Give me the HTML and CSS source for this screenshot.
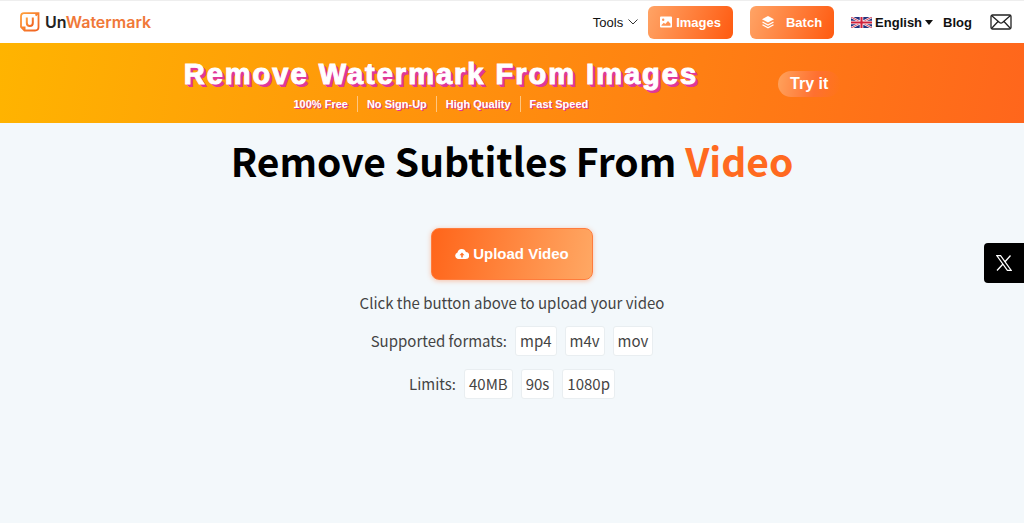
FILE: index.html
```html
<!DOCTYPE html>
<html lang="en">
<head>
    <meta charset="UTF-8">
    <meta name="viewport" content="width=device-width, initial-scale=1.0">
    <title>Remove Subtitles From Video - UnWatermark</title>
    <link rel="stylesheet" href="styles.css">
</head>
<body>
    <header class="header">
        <a class="logo" href="#">
            <svg width="20" height="20" viewBox="0 0 20 20" fill="none" aria-hidden="true">
                <defs>
                    <linearGradient id="logoFill" x1="0" y1="0" x2="1" y2="1">
                        <stop offset="0" stop-color="#ffa03c"/>
                        <stop offset="1" stop-color="#f06020"/>
                    </linearGradient>
                </defs>
                <path d="M4 1.200H18.500V15Q18.500 18.500 15 18.500H4.500L1 15V4.500Q1 1.200 4 1.200Z" stroke="url(#logoFill)" stroke-width="1.800"/>
                <path d="M15.500 3.500L18 1.500M1.500 15.500H4.500V18" stroke="url(#logoFill)" stroke-width="2"/>
                <path d="M6.800 5.500V11Q6.800 14 9.800 14T12.800 11V5.500" stroke="url(#logoFill)" stroke-width="2"/>
            </svg>
            <span>Un<span class="logo-accent">Watermark</span></span>
        </a>
        <nav class="nav">
            <button class="tools" type="button">Tools
                <svg width="10" height="6" viewBox="0 0 10 6" fill="none" stroke="#333" aria-hidden="true"><path d="M.5 .5L5 5L9.500 .5"/></svg>
            </button>
            <a class="nav-btn" href="#">
                <svg width="12" height="12" viewBox="0 0 12 12" aria-hidden="true">
                    <path fill="#fff" fill-rule="evenodd" d="M1 .5H11Q12 .5 12 1.500V10.500Q12 11.500 11 11.500H1Q0 11.500 0 10.500V1.500Q0 .5 1 .5ZM3.200 2.500A1.200 1.200 0 1 0 3.200 4.900A1.200 1.200 0 1 0 3.200 2.500ZM1.500 9.800H10.500V7.800L8 5L5.300 8L3.800 6.800L1.500 9Z"/>
                </svg>
                Images
            </a>
            <a class="nav-btn nav-btn-batch" href="#">
                <svg width="12" height="13" viewBox="0 0 12 13" aria-hidden="true">
                    <path fill="#fff" d="M6 0L12 3.300L6 6.600L0 3.300Z"/>
                    <path fill="none" stroke="#fff" stroke-width="1.300" d="M.5 6L6 9L11.500 6M.5 8.800L6 11.800L11.500 8.800"/>
                </svg>
                Batch
            </a>
            <div class="language">
                <svg width="21" height="11" viewBox="0 0 20 10" preserveAspectRatio="none" aria-hidden="true">
                    <path fill="#22307c" d="M0 0H20V10H0Z"/>
                    <path stroke="#fff" stroke-width="2" d="M0 0L20 10M20 0L0 10"/>
                    <path stroke="#d0213c" stroke-width=".8" d="M0 0L20 10M20 0L0 10"/>
                    <path stroke="#fff" stroke-width="3.400" d="M10 0V10M0 5H20"/>
                    <path stroke="#d0213c" stroke-width="2" d="M10 0V10M0 5H20"/>
                </svg>
                <select class="language-select" aria-label="Language">
                    <option>English</option>
                </select>
                <span class="caret"></span>
            </div>
            <a class="blog" href="#">Blog</a>
            <a class="mail" href="#" aria-label="Contact us">
                <svg width="22" height="16" viewBox="0 0 22 16" fill="none" stroke="#222" stroke-width="1.300" aria-hidden="true">
                    <rect x="1" y="1" width="20" height="14" rx="1.500"/>
                    <path d="M1.500 1.500L9.500 8.500Q11 9.700 12.500 8.500L20.500 1.500M1.500 14.500L8 7.500M20.500 14.500L14 7.500"/>
                </svg>
            </a>
        </nav>
    </header>

    <section class="banner">
        <div class="banner-text">
            <h2 class="banner-title">Remove Watermark From Images</h2>
            <ul class="features">
                <li>100% Free</li>
                <li>No Sign-Up</li>
                <li>High Quality</li>
                <li>Fast Speed</li>
            </ul>
        </div>
        <a class="try-btn" href="#">Try it</a>
    </section>

    <main class="main">
        <h1 class="title">Remove Subtitles From <span class="title-accent">Video</span></h1>
        <button class="upload-btn" type="button">
            <svg width="14" height="12" viewBox="0 0 14 12" aria-hidden="true">
                <path fill="#fff" fill-rule="evenodd" d="M3.500 11A3.400 3.400 0 0 1 2.500 4.400A4.400 4.400 0 0 1 10.900 4A3.500 3.500 0 0 1 10.500 11ZM6.200 9.500H7.800V7.200H9.500L7 4.500L4.500 7.200H6.200Z"/>
            </svg>
            Upload Video
        </button>
        <p class="hint">Click the button above to upload your video</p>
        <div class="info-row">
            <span class="info-label">Supported formats:</span>
            <span class="tag">mp4</span>
            <span class="tag">m4v</span>
            <span class="tag">mov</span>
        </div>
        <div class="info-row">
            <span class="info-label">Limits:</span>
            <span class="tag">40MB</span>
            <span class="tag">90s</span>
            <span class="tag">1080p</span>
        </div>
    </main>

    <a class="share" href="#" aria-label="Share on X">
        <svg width="16" height="16" viewBox="0 0 16 16" fill="none" stroke="#fff" aria-hidden="true">
            <path d="M.8 .6H4.600L15.200 15.400H11.400Z" stroke-width="1.200"/>
            <path d="M14.500 .5L8.800 7M7 9L1 15.500" stroke-width="1.300"/>
        </svg>
    </a>
</body>
</html>
```
FILE: styles.css
```css
* {
    box-sizing: border-box;
}

body {
    margin: 0;
    min-height: 100vh;
    background-color: #f3f8fb;
    color: #444;
    font-family: "Noto Sans CJK SC", sans-serif;
}

a {
    color: inherit;
    text-decoration: none;
}

button,
select {
    border: none;
    background: none;
    padding: 0;
    color: inherit;
    font: inherit;
    cursor: pointer;
}

/* Header */
.header {
    display: flex;
    align-items: center;
    justify-content: space-between;
    height: 43px;
    padding: 0 12px 0 20px;
    background-color: #fff;
    border-top: 1px solid #eee;
    color: #111;
    font-family: "Liberation Sans", Arial, sans-serif;
    font-size: 13px;
}

.logo {
    display: flex;
    align-items: center;
    gap: 5px;
    color: #222;
    font-family: Inter, sans-serif;
    font-size: 16px;
    font-weight: 600;
}

.logo-accent {
    color: #f07838;
}

.nav {
    display: flex;
    align-items: center;
}

.tools {
    display: flex;
    align-items: center;
    gap: 5px;
    margin-right: 10px;
}

.nav-btn {
    display: flex;
    align-items: center;
    justify-content: center;
    gap: 4px;
    height: 33px;
    padding: 0 12px;
    margin-right: 17px;
    border-radius: 6px;
    background: linear-gradient(110deg, #ffa466, #ff5a10);
    color: #fff;
    font-weight: bold;
}

.nav-btn-batch {
    gap: 12px;
}

.language {
    display: flex;
    align-items: center;
    gap: 3px;
    margin-right: 10px;
    font-weight: bold;
}

.language-select {
    appearance: none;
}

.caret {
    border: 4px solid transparent;
    border-top: 5px solid #111;
    border-bottom: 0;
}

.blog {
    margin-right: 18px;
    font-weight: bold;
}

.mail {
    display: flex;
}

/* Banner */
.banner {
    display: flex;
    align-items: center;
    justify-content: center;
    gap: 80px;
    height: 80px;
    padding-top: 2px;
    background: linear-gradient(100deg, #ffb400, #ff661c);
    color: #fff;
    font-family: "Liberation Sans", Arial, sans-serif;
    font-weight: bold;
}

.banner-title {
    margin: 0;
    font-size: 29px;
    line-height: 36px;
    letter-spacing: 2px;
    -webkit-text-stroke: 1px #fff;
    text-shadow: 1px 1px 0 #e0379a, 2px 2px 0 #e0379a, 3px 3px 0 #e0379a;
}

.features {
    display: flex;
    justify-content: center;
    margin: 4px 0 0;
    padding: 0;
    list-style: none;
    font-size: 11px;
    line-height: 16px;
    text-shadow: 1px 1px 0 #e0379a;
}

.features li {
    padding: 0 9px;
}

.features li + li {
    border-left: 1px solid #ffc680;
}

.try-btn {
    padding: 4px 12px;
    border-radius: 13px;
    background: linear-gradient(100deg, #ffa25c, #ff7030 60%, transparent);
    font-size: 16px;
}

/* Upload area */
.main {
    display: flex;
    flex-direction: column;
    align-items: center;
    padding: 7px 16px 0;
    font-size: 15px;
    line-height: 24px;
}

.title {
    margin: 0 0 38px;
    color: #000;
    font-size: 39px;
    font-weight: bold;
    line-height: 60px;
    text-align: center;
}

.title-accent {
    color: #ff6a20;
}

.upload-btn {
    display: flex;
    align-items: center;
    gap: 4px;
    padding: 13px 23px;
    border: 1px solid #ff7c3c;
    border-radius: 8px;
    background: linear-gradient(100deg, #ff651a, #ffa864);
    box-shadow: 0 1px 5px rgba(255, 110, 40, 0.4);
    color: #fff;
    font-family: "Liberation Sans", Arial, sans-serif;
    font-size: 15px;
    font-weight: bold;
}

.hint {
    margin: 11px 0;
}

.info-row {
    display: flex;
    align-items: center;
    gap: 8px;
    margin-bottom: 13px;
}

.tag {
    padding: 2px 4px;
    border: 1px solid #e9eef1;
    border-radius: 3px;
    background-color: #fff;
}

/* Share button on the right edge */
.share {
    position: fixed;
    top: 243px;
    right: 0;
    display: flex;
    align-items: center;
    justify-content: center;
    width: 40px;
    height: 40px;
    border-radius: 4px 0 0 4px;
    background-color: #000;
}
```
